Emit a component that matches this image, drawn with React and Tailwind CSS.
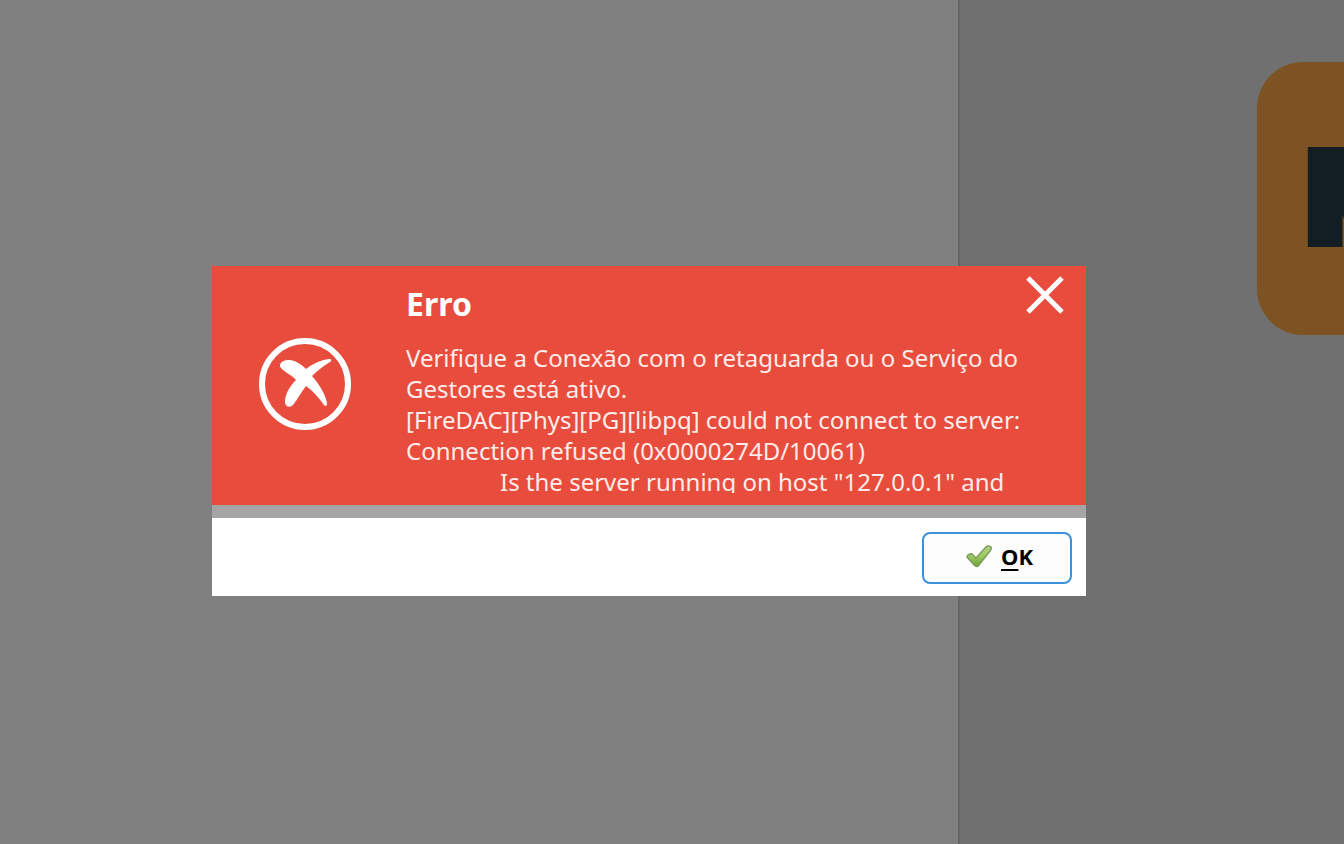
import React from 'react';

const ErrorIcon = () => (
  <svg className="h-24 w-24 shrink-0" viewBox="0 0 96 96" aria-hidden="true">
    <circle cx="48" cy="48" r="43" fill="none" stroke="#fff" strokeWidth="6" />
    <path
      fill="#fff"
      d="M23 30 C23 25 28 24 33 24 C40 25 45 29 49 33 C55 28 64 24 72 23 C75 23 75 25 73 26 C66 30 60 35 55 40 C62 48 68 57 70 67 C70 70 69 71 67 69 C62 62 56 55 49 50 C44 56 41 63 36 69 C33 72 28 71 28 66 C28 58 33 50 39 44 C35 39 29 37 25 33 C24 32 23 31 23 30 Z"
    />
  </svg>
);

const CloseIcon = () => (
  <svg className="h-10 w-10" viewBox="0 0 40 40" aria-hidden="true">
    <path d="M3 3 L37 37 M37 3 L3 37" fill="none" stroke="#fff" strokeWidth="5" />
  </svg>
);

const CheckIcon = () => (
  <svg className="h-6 w-7" viewBox="0 0 28 24" aria-hidden="true">
    <defs>
      <linearGradient id="check" x1="0" y1="0" x2="0" y2="1">
        <stop offset="0" stopColor="#b3d583" />
        <stop offset="0.5" stopColor="#9cc962" />
        <stop offset="1" stopColor="#6aa332" />
      </linearGradient>
    </defs>
    <path
      d="M2 13 Q2 11 5 10 Q7 9 8 11 L11 14 L21 3 Q23 1 26 3 Q27 4 25 7 L14 21 Q12 24 9 21 Z"
      fill="url(#check)"
      stroke="#7f9c5e"
      strokeWidth="1.5"
      strokeLinejoin="round"
    />
  </svg>
);

const Background = () => (
  <div className="flex min-h-screen overflow-hidden bg-[#808080]">
    <div className="flex-1 border-r-2 border-[#666666]" />
    <div className="flex w-[384px] justify-end overflow-hidden bg-[#707070] pt-[62px]">
      <div className="flex h-[273px] w-[87px] items-center overflow-hidden rounded-l-[46px] bg-[#7e5323] pb-1 pl-[50px]">
        <span className="font-['Inter'] text-[124px] leading-none font-black text-[#121e23] [-webkit-text-stroke:10px_#121e23]">M</span>
      </div>
    </div>
  </div>
);

const ErrorDialog = () => (
  <div
    role="alertdialog"
    aria-labelledby="dialog-title"
    aria-describedby="dialog-message"
    className="w-full max-w-[874px] bg-white font-['Noto_Sans',sans-serif]"
  >
    <div className="flex h-[239px] items-start bg-[#e84c3d] text-white">
      <div className="flex w-[194px] shrink-0 pt-[70px] pl-[45px]">
        <ErrorIcon />
      </div>
      <div className="min-w-0 flex-1 pt-[19px]">
        <h1 id="dialog-title" className="text-[32px] leading-[38px] font-bold">
          Erro
        </h1>
        <div
          id="dialog-message"
          className="mt-[19px] h-[151px] overflow-hidden text-[24px] leading-[31px] whitespace-nowrap text-[#ffecea]"
        >
          <p>Verifique a Conexão com o retaguarda ou o Serviço do</p>
          <p>Gestores está ativo.</p>
          <p>[FireDAC][Phys][PG][libpq] could not connect to server:</p>
          <p>Connection refused (0x0000274D/10061)</p>
          <p className="pl-[94px]">Is the server running on host "127.0.0.1" and</p>
        </div>
      </div>
      <button type="button" aria-label="Fechar" className="mt-[9px] mr-[21px]">
        <CloseIcon />
      </button>
    </div>
    <div className="h-[13px] bg-[#a5a5a5]" />
    <div className="flex justify-end px-[14px] pt-[14px] pb-3">
      <button
        type="button"
        className="flex h-[52px] w-[150px] items-center justify-center gap-2 rounded-lg border-2 border-[#3a92dc] bg-[#fdfdfd] pb-1 pl-1 text-[22px] font-bold text-black"
      >
        <CheckIcon />
        <span>
          <u className="underline-offset-4">O</u>K
        </span>
      </button>
    </div>
  </div>
);

const App = () => (
  <main className="relative">
    <Background />
    <div className="fixed inset-0 flex items-center justify-center pt-[18px] pr-[46px]">
      <ErrorDialog />
    </div>
  </main>
);

export default App;
